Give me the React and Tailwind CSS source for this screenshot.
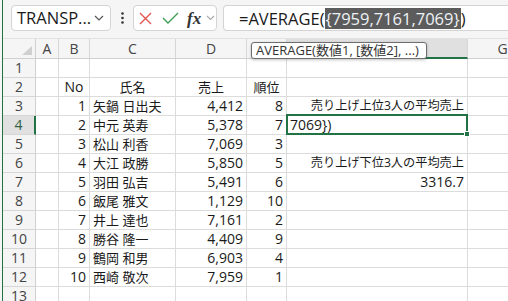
import React from "react";

const FONT = { fontFamily: '"Open Sans","Noto Sans CJK JP",sans-serif' };

const data = [
  [1, "矢鍋 日出夫", "4,412", 8],
  [2, "中元 英寿", "5,378", 7],
  [3, "松山 利香", "7,069", 3],
  [4, "大江 政勝", "5,850", 5],
  [5, "羽田 弘吉", "5,491", 6],
  [6, "飯尾 雅文", "1,129", 10],
  [7, "井上 達也", "7,161", 2],
  [8, "勝谷 隆一", "4,409", 9],
  [9, "鶴岡 和男", "6,903", 4],
  [10, "西崎 敬次", "7,959", 1],
];

const fText = {
  3: { t: "売り上げ上位3人の平均売上", cls: "text-right text-[12.2px]" },
  6: { t: "売り上げ下位3人の平均売上", cls: "text-right text-[12.2px]" },
  7: { t: "3316.7", cls: "text-right text-[14px]" },
};

function Cell({ children, className = "" }) {
  return (
    <div
      className={
        "h-[19px] leading-[18px] border-r border-b border-[#dcdcdc] bg-white px-[3px] whitespace-nowrap text-[#1a1a1a] " +
        className
      }
    >
      {children}
    </div>
  );
}

function RowHeader({ n, active }) {
  return (
    <div
      className={
        "h-[19px] leading-[18px] border-b border-[#d6d6d6] text-center text-[14px] " +
        (active
          ? "bg-[#e0e0e0] border-r-2 border-r-[#217346] text-[#2f5f40]"
          : "bg-[#f5f5f5] border-r border-r-[#d0d0d0] text-[#444]")
      }
    >
      {n}
    </div>
  );
}

export default function App() {
  const rows = [];
  for (let r = 1; r <= 13; r++) {
    const d = r >= 3 && r <= 12 ? data[r - 3] : null;
    rows.push(
      <React.Fragment key={r}>
        <RowHeader n={r} active={r === 4} />
        <Cell />
        <Cell className="text-right text-[14px]">
          {r === 2 ? <span className="block text-center">No</span> : d ? d[0] : ""}
        </Cell>
        <Cell className="text-[13px]">
          {r === 2 ? <span className="block text-center">氏名</span> : d ? d[1] : ""}
        </Cell>
        <Cell className="text-right text-[14px]">
          {r === 2 ? <span className="block text-center text-[13px]">売上</span> : d ? d[2] : ""}
        </Cell>
        <Cell className="text-right text-[14px]">
          {r === 2 ? <span className="block text-center text-[13px]">順位</span> : d ? d[3] : ""}
        </Cell>
        {r === 4 ? (
          <div className="relative h-[19px] leading-[18px] border-r border-b border-[#dcdcdc] bg-white px-[3px] text-[14px] text-[#1a1a1a]">
            7069})
            <div className="absolute -top-[2px] -left-[1px] -right-[1px] -bottom-[1px] border-2 border-[#217346]" />
            <div className="absolute -right-[3px] -bottom-[3px] w-[6px] h-[6px] bg-[#217346] border border-white" />
          </div>
        ) : (
          <Cell className={fText[r] ? fText[r].cls : ""}>{fText[r] ? fText[r].t : ""}</Cell>
        )}
        <Cell />
      </React.Fragment>
    );
  }

  const colHead = (label, active) => (
    <div
      className={
        "h-[20px] leading-[19px] text-center text-[14px] border-r border-r-[#d6d6d6] " +
        (active
          ? "bg-[#e0e0e0] border-b-2 border-b-[#217346] text-[#2f5f40]"
          : "bg-[#f5f5f5] border-b border-b-[#d0d0d0] text-[#444]")
      }
    >
      {label}
    </div>
  );

  return (
    <div className="relative w-[508px] h-[301px] overflow-hidden bg-[#f5f5f5] flex" style={FONT}>
      <div className="w-[2px] shrink-0" />
      <div className="w-px shrink-0 bg-[#217346]" />
      <div className="flex-1 flex flex-col min-w-0">
        {/* formula bar */}
        <div className="h-[38px] shrink-0 flex items-start pt-[5px]">
          <div className="ml-[8px] w-[100px] h-[26px] shrink-0 bg-white border border-[#d4d4d4] rounded-[4px] flex items-center pl-[5px] pr-[6px]">
            <span className="text-[16.5px] leading-none text-[#1a1a1a]">TRANSP...</span>
            <svg className="ml-auto" width="10" height="6" viewBox="0 0 10 6">
              <path d="M1 1 L5 5 L9 1" fill="none" stroke="#555" strokeWidth="1.2" />
            </svg>
          </div>
          <div className="w-[22px] h-[26px] shrink-0 flex items-center justify-center">
            <svg width="3" height="12" viewBox="0 0 3 12">
              <circle cx="1.5" cy="1.5" r="1.3" fill="#333" />
              <circle cx="1.5" cy="6" r="1.3" fill="#333" />
              <circle cx="1.5" cy="10.5" r="1.3" fill="#333" />
            </svg>
          </div>
          <div className="w-[84px] h-[26px] shrink-0 bg-white border border-[#d4d4d4] rounded-[4px] flex items-center pl-[5px]">
            <svg width="13" height="13" viewBox="0 0 13 13">
              <path d="M1 1 L12 12 M12 1 L1 12" stroke="#e2524e" strokeWidth="1.4" fill="none" />
            </svg>
            <svg className="ml-[10px]" width="17" height="12" viewBox="0 0 17 12">
              <path d="M1 6 L6 11 L16 1" stroke="#3f9e55" strokeWidth="1.4" fill="none" />
            </svg>
            <span
              className="ml-[8px] text-[17px] leading-none italic font-bold text-[#333]"
              style={{ fontFamily: '"Liberation Serif",serif' }}
            >
              fx
            </span>
            <svg className="ml-[5px]" width="9" height="6" viewBox="0 0 9 6">
              <path d="M1 1 L4.5 4.5 L8 1" fill="none" stroke="#aaa" strokeWidth="1.2" />
            </svg>
          </div>
          <div className="ml-[6px] flex-1 h-[26px] bg-white border border-r-0 border-[#d4d4d4] rounded-l-[4px] flex items-center pl-[15px] whitespace-nowrap overflow-hidden">
            <span className="text-[16.5px] text-[#1a1a1a] leading-[21px]">=AVERAGE(</span>
            <span className="text-[16.5px] leading-[21px] h-[21px] bg-[#5c5c5c] text-[#eef2f7] px-px">
              {"{7959,7161,7069}"}
            </span>
            <span className="text-[16.5px] text-[#1a1a1a] leading-[21px]">)</span>
          </div>
        </div>

        {/* grid */}
        <div className="grid grid-cols-[33px_23px_31px_86px_71px_40px_181px_70px] border-t border-[#e2e2e2]">
          <div className="h-[20px] bg-[#f5f5f5] border-r border-b border-[#d0d0d0] flex items-end justify-end pr-[3px] pb-[3px]">
            <svg width="10" height="9" viewBox="0 0 10 9">
              <path d="M10 0 L10 9 L0 9 Z" fill="#d0d0d0" />
            </svg>
          </div>
          {colHead("A")}
          {colHead("B")}
          {colHead("C")}
          {colHead("D")}
          {colHead("E")}
          {colHead("F", true)}
          {colHead("G")}
          {rows}
        </div>
      </div>

      {/* function tooltip */}
      <div className="absolute left-[251px] top-[42px] w-[176px] h-[17px] bg-white border border-[#6e6e6e] rounded-[3px] shadow-[0_1px_3px_rgba(0,0,0,0.25)] pl-[4px] text-[13px] leading-[15px] text-[#333] whitespace-nowrap">
        AVERAGE(数値1, [数値2], ...)
      </div>
    </div>
  );
}
